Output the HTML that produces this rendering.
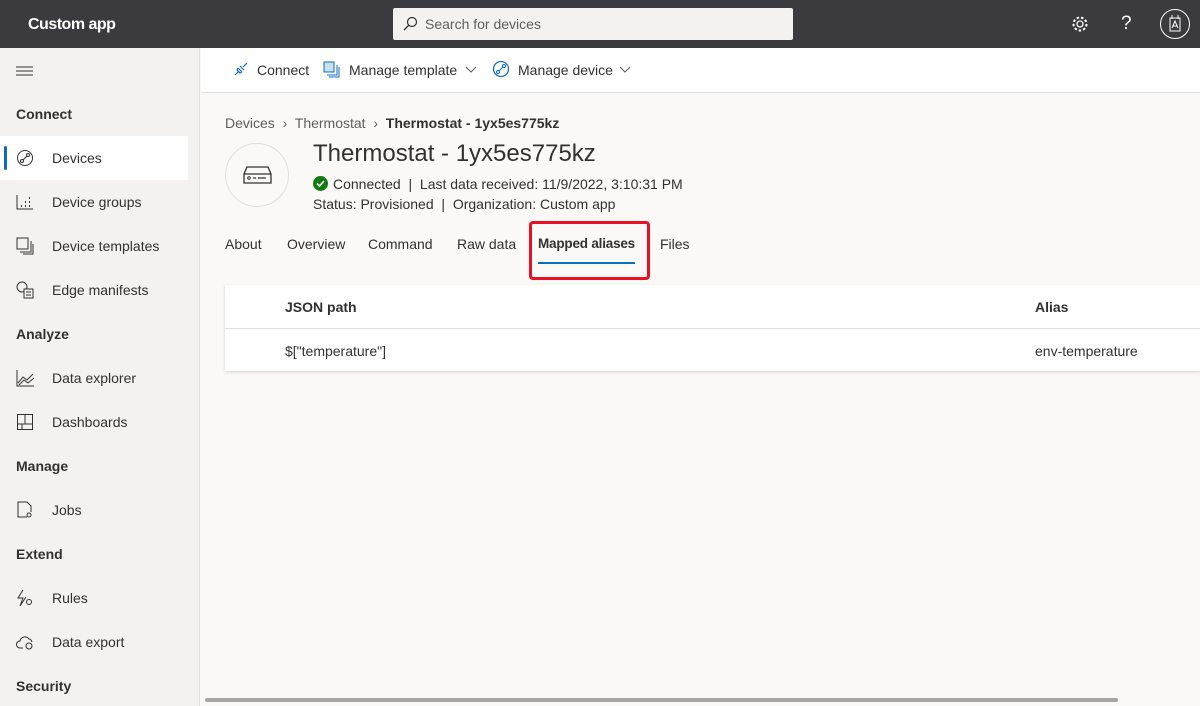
<!DOCTYPE html>
<html><head><meta charset="utf-8"><style>
*{box-sizing:border-box;margin:0;padding:0}
body{width:1200px;height:706px;overflow:hidden;font-family:"Liberation Sans",sans-serif;font-size:14px;color:#323130;background:#faf9f8;position:relative}
.top{position:absolute;left:0;top:0;width:1200px;height:48px;background:#3b3a3e;color:#fff}
.title{position:absolute;left:28px;top:16px;font-size:16px;font-weight:bold;letter-spacing:-0.5px}
.search{position:absolute;left:393px;top:8px;width:400px;height:32px;background:#f3f2f1;border-radius:2px;color:#605e5c;padding:8px 0 0 32px}
.side{position:absolute;left:0;top:48px;width:200px;height:658px;background:#f3f2f1;border-right:1px solid #e1dfdd}
.sec{position:absolute;left:16px;font-weight:bold;font-size:14px}
.it{position:absolute;left:0;width:188px;height:44px;padding:14px 0 0 52px}
.it svg{position:absolute;left:16px;top:13px}
.cmd{position:absolute;left:201px;top:48px;width:999px;height:45px;background:#fff;border-bottom:1px solid #e1dfdd}
.cmd span{position:absolute;top:14px}
.abs{position:absolute}
.card{position:absolute;left:225px;top:285px;width:975px;height:86px;background:#fff;box-shadow:0 1px 3px rgba(0,0,0,.15)}
</style></head><body>
<div class="top"><div class="title">Custom app</div>
<div class="search"><svg class="abs" style="left:9px;top:8px" width="16" height="16"><circle cx="10" cy="6" r="4.5" fill="none" stroke="#323130" stroke-width="1.2"/><line x1="7" y1="9" x2="2" y2="14" stroke="#323130" stroke-width="1.3"/></svg>Search for devices</div>
<svg class="abs" style="left:1071px;top:15px" width="18" height="18"><circle cx="9" cy="9" r="3" fill="none" stroke="#fff" stroke-width="1.3"/><circle cx="9" cy="9" r="6.5" fill="none" stroke="#fff" stroke-width="2" stroke-dasharray="2.5 2"/></svg>
<div class="abs" style="left:1121px;top:13px;font-size:19px">?</div>
<svg class="abs" style="left:1159px;top:8px" width="32" height="32"><circle cx="16" cy="16" r="14.5" fill="none" stroke="#fff"/><rect x="11" y="10" width="10" height="13" fill="none" stroke="#fff"/><path d="M13 7v4M19 7v4M13 20l3-7 3 7M14 18h4" fill="none" stroke="#fff"/></svg>
</div>
<div class="side">
<svg class="abs" style="left:16px;top:18px" width="17" height="10"><path d="M0 1h17M0 5h17M0 9h17" stroke="#323130"/></svg>
<div class="sec" style="top:58px">Connect</div>
<div class="it" style="top:88px;background:#fff"><div class="abs" style="left:4px;top:10px;width:3px;height:24px;background:#0f6cbd;border-radius:2px"></div><svg width="18" height="18"><circle cx="9" cy="9" r="7.5" fill="none" stroke="#323130"/><circle cx="6" cy="12" r="1.5" fill="none" stroke="#323130"/><circle cx="12" cy="6" r="1.5" fill="none" stroke="#323130"/><path d="M7 11l4-4" stroke="#323130"/></svg>Devices</div>
<div class="it" style="top:132px"><svg width="18" height="18"><path d="M1 2v14h16" fill="none" stroke="#323130"/><path d="M5 13h1M9 13h1M13 13h1M9 9h1M13 9h1M13 5h1" stroke="#323130" stroke-width="2"/></svg>Device groups</div>
<div class="it" style="top:176px"><svg width="18" height="18"><rect x="1" y="1" width="11" height="11" fill="none" stroke="#323130"/><path d="M4 15h11V4M7 17h10V7" fill="none" stroke="#323130"/></svg>Device templates</div>
<div class="it" style="top:220px"><svg width="18" height="18"><circle cx="6" cy="6" r="5" fill="none" stroke="#323130"/><rect x="8" y="8" width="9" height="9" fill="#f3f2f1" stroke="#323130"/><path d="M10 11h5M10 14h5" stroke="#323130"/></svg>Edge manifests</div>
<div class="sec" style="top:278px">Analyze</div>
<div class="it" style="top:308px"><svg width="18" height="18"><path d="M1 1v16h17M2 14l5-6 4 3 6-6M3 16l5-5 4 3 6-5" fill="none" stroke="#323130"/></svg>Data explorer</div>
<div class="it" style="top:352px"><svg width="18" height="18"><rect x="1.5" y="1.5" width="15" height="15" fill="none" stroke="#323130"/><path d="M9 1v10M1 11h16M6 11v6" stroke="#323130"/></svg>Dashboards</div>
<div class="sec" style="top:410px">Manage</div>
<div class="it" style="top:440px"><svg width="18" height="18"><path d="M11 16H2V1h9l4 4v6" fill="none" stroke="#323130"/><circle cx="13" cy="14" r="2" fill="none" stroke="#323130"/></svg>Jobs</div>
<div class="sec" style="top:498px">Extend</div>
<div class="it" style="top:528px"><svg width="18" height="18"><path d="M7 1L2 9h5l-3 8 6-9" fill="none" stroke="#323130"/><circle cx="13" cy="13" r="2.5" fill="none" stroke="#323130"/></svg>Rules</div>
<div class="it" style="top:572px"><svg width="18" height="18"><path d="M7 15H4a3 3 0 010-7 5 5 0 019-2 4 4 0 013 3" fill="none" stroke="#323130"/><circle cx="13" cy="13" r="3" fill="none" stroke="#323130"/></svg>Data export</div>
<div class="sec" style="top:630px">Security</div>
</div>
<div class="cmd">
<svg class="abs" style="left:32px;top:13px" width="16" height="16"><path d="M2 14l4-4M10 6l4-4M5 7l4 4M7 5l4 4 M5 7l-1 2 3 3 2-1" fill="none" stroke="#0f6cbd" stroke-width="1.2"/></svg><span style="left:56px">Connect</span>
<svg class="abs" style="left:122px;top:13px" width="17" height="17"><rect x="1" y="1" width="10" height="10" fill="#c7e0f4" stroke="#0f6cbd"/><path d="M4 14h10V4M6 16h10V6" fill="none" stroke="#0f6cbd"/></svg><span style="left:148px">Manage template</span>
<svg class="abs" style="left:264px;top:18px" width="12" height="8"><path d="M1 1l5 5 5-5" fill="none" stroke="#605e5c"/></svg>
<svg class="abs" style="left:291px;top:12px" width="18" height="18"><circle cx="9" cy="9" r="7.5" fill="none" stroke="#0f6cbd" stroke-width="1.3"/><circle cx="6" cy="12" r="1.5" fill="none" stroke="#0f6cbd"/><circle cx="12" cy="6" r="1.5" fill="none" stroke="#0f6cbd"/><path d="M7 11l4-4" stroke="#0f6cbd"/></svg><span style="left:317px">Manage device</span>
<svg class="abs" style="left:418px;top:18px" width="12" height="8"><path d="M1 1l5 5 5-5" fill="none" stroke="#605e5c"/></svg>
</div>
<div class="abs" style="left:225px;top:115px;color:#605e5c">Devices &nbsp;›&nbsp; Thermostat &nbsp;›&nbsp; <b style="color:#323130">Thermostat - 1yx5es775kz</b></div>
<div class="abs" style="left:225px;top:143px;width:64px;height:64px;border-radius:50%;border:1px solid #e1dfdd;background:#faf9f8"></div>
<svg class="abs" style="left:243px;top:166px" width="29" height="18"><path d="M4 1h21l3 7v9H1V8z M1 8h27" fill="none" stroke="#323130" stroke-width="1.3"/><circle cx="6" cy="12" r="1.3" fill="none" stroke="#323130"/><path d="M10 12h3M15 12h8" stroke="#323130" stroke-width="1.3"/></svg>
<div class="abs" style="left:313px;top:140px;font-size:24px;color:#323130">Thermostat - 1yx5es775kz</div>
<svg class="abs" style="left:313px;top:176px" width="15" height="15"><circle cx="7.5" cy="7.5" r="7.5" fill="#107c10"/><path d="M4 7.5l2.5 2.5 4.5-5" fill="none" stroke="#fff" stroke-width="1.6"/></svg>
<div class="abs" style="left:333px;top:176px">Connected &nbsp;| &nbsp;Last data received: 11/9/2022, 3:10:31 PM</div>
<div class="abs" style="left:313px;top:196px">Status: Provisioned &nbsp;| &nbsp;Organization: Custom app</div>
<div class="abs" style="left:225px;top:236px">About</div>
<div class="abs" style="left:287px;top:236px">Overview</div>
<div class="abs" style="left:368px;top:236px">Command</div>
<div class="abs" style="left:457px;top:236px">Raw data</div>
<div class="abs" style="left:538px;top:236px;font-weight:bold;font-size:13.5px;letter-spacing:-0.2px">Mapped aliases</div>
<div class="abs" style="left:538px;top:262px;width:97px;height:2px;background:#0f6cbd"></div>
<div class="abs" style="left:529px;top:221px;width:121px;height:59px;border:3px solid #e81123;border-radius:4px"></div>
<div class="abs" style="left:660px;top:236px">Files</div>
<div class="card">
<div class="abs" style="left:60px;top:14px;font-weight:bold;font-size:14px">JSON path</div>
<div class="abs" style="left:810px;top:14px;font-weight:bold">Alias</div>
<div class="abs" style="left:0;top:43px;width:975px;height:1px;background:#e1dfdd"></div>
<div class="abs" style="left:60px;top:58px">$["temperature"]</div>
<div class="abs" style="left:810px;top:58px">env-temperature</div>
</div>
<div class="abs" style="left:205px;top:698px;width:913px;height:4px;border-radius:2px;background:#a6a6a6"></div>
</body></html>
